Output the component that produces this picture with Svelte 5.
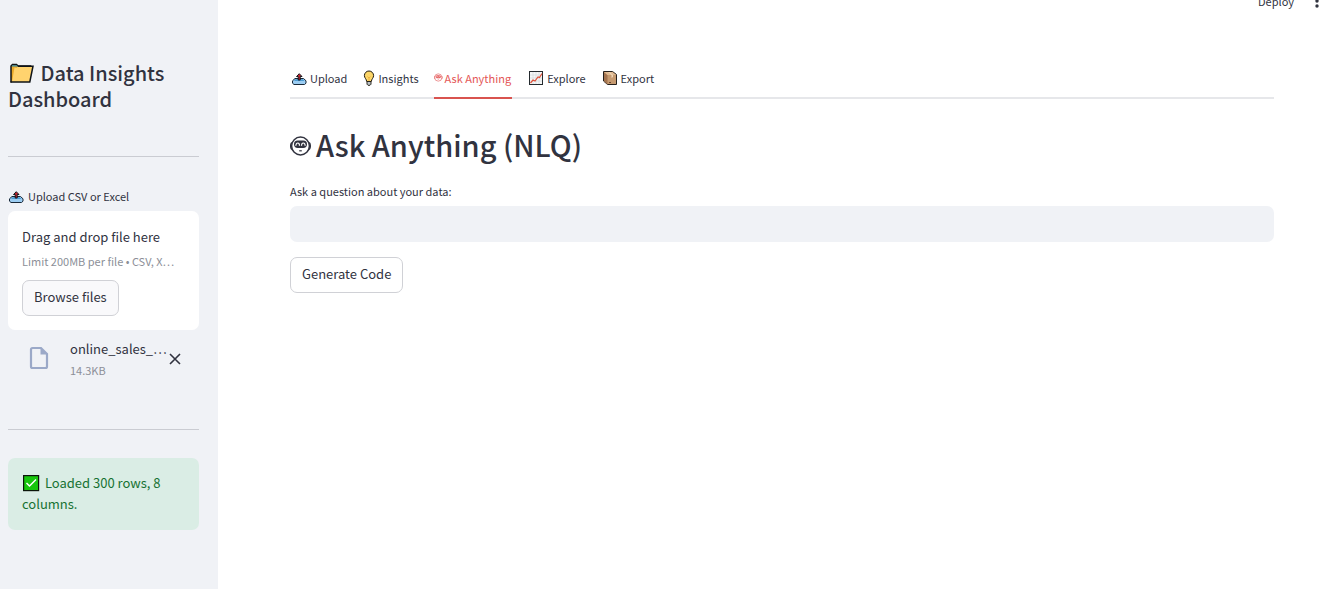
<script>
  const tabs = ['Upload', 'Insights', 'Ask Anything', 'Explore', 'Export'];
  let active = $state('Ask Anything');
  let question = $state('');
</script>

{#snippet tray()}
  <svg class="emoji" viewBox="0 0 16 16" aria-hidden="true">
    <path d="M4 8.500 1.500 10.800v2.400L3 14.500h10.500l1.500-1.300v-2.400L12.500 8.500z" fill="#9ccdf2" stroke="#182838" />
    <path d="M4.500 9.200h7.500l1.500 1.800h-10.500z" fill="#4b9bd3" />
    <path d="M8.250 3.700 5.500 6.500h1.700v3.500h2v-3.500h1.800z" fill="#c8202e" stroke="#15181c" />
  </svg>
{/snippet}

{#snippet bot()}
  <svg class="bot" viewBox="0 0 22 22" fill="none" stroke="currentColor" aria-hidden="true">
    <circle cx="10.500" cy="11" r="8.900" stroke-width="1.500" />
    <path d="M1.800 7.500Q.7 9 .7 11T1.800 14.500M19.200 7.500q1.100 1.500 1.100 3.500t-1.100 3.500" stroke-width="1.500" />
    <rect x="4" y="5.500" width="13" height="7.500" rx="3.700" fill="currentColor" stroke="none" />
    <path d="M5.800 10.800q.3-2.800 2-2.800t1.700 2.800M11.500 10.800q.1-2.800 1.800-2.800t1.900 2.800" stroke="#fff" stroke-width="1.200" />
    <path d="M9.200 15.800h2.600" stroke-width="1.200" />
  </svg>
{/snippet}

{#snippet tabIcon(name)}
  {#if name === 'Upload'}
    {@render tray()}
  {:else if name === 'Insights'}
    <svg class="bulb" viewBox="0 0 12 16" aria-hidden="true">
      <path d="M6 1a4.600 4.600 0 0 0-4.600 4.600C1.400 8 3.500 9 3.700 11.500h4.600C8.500 9 10.600 8 10.600 5.600A4.600 4.600 0 0 0 6 1z" fill="#fcd669" stroke="#1f1a10" />
      <path d="M4 11.500h4v2.700L7 15.300H5l-1-1.100z" fill="#b9c2c8" stroke="#1f1a10" stroke-width=".9" />
      <path d="M4.500 6.500 6 8l1.500-1.500M6 8v3" fill="none" stroke="#e49a27" stroke-width=".6" />
    </svg>
  {:else if name === 'Ask Anything'}
    {@render bot()}
  {:else if name === 'Explore'}
    <svg class="emoji" viewBox="0 0 16 16" aria-hidden="true">
      <rect x="1.500" y="1.500" width="13" height="13" fill="#f6f7f7" stroke="#242a2e" />
      <path d="M2 5h12M2 8h12M2 11h12M5 2v12M8 2v12M11 2v12" stroke="#d0d6da" stroke-width=".6" />
      <path d="m2.500 13 2.500-3 2 1 3-4 1.500.5 2.500-4" fill="none" stroke="#df5038" stroke-width="1.200" />
    </svg>
  {:else}
    <svg class="emoji" viewBox="0 0 16 16" aria-hidden="true">
      <path d="M1.500 1.500h9l4 3v10h-9l-4-3.500z" fill="#c69a70" stroke="#25201c" />
      <path d="m2 2 3.500 3v9.500L2 11z" fill="#a3734e" />
      <path d="M2 2h8.500L14 5H5.500z" fill="#dfb990" />
      <path d="m6 2 3.500 3v3l1.500-1V5L7.500 2z" fill="#efd5b5" />
      <path d="M7 12.500h2" stroke="#6d4a31" />
    </svg>
  {/if}
{/snippet}

<div class="app">
  <aside>
    <h2>
      <svg class="folder" viewBox="0 0 27 22" aria-hidden="true">
        <path d="M3 19.500V3l1.500-1.500h4L10 3h12.500v3" fill="#e9a928" stroke="#101417" stroke-width="1.500" />
        <path d="M4 2.300h5l.7 1.200H4z" fill="#2d87aa" />
        <path d="M6.500 4.500 4 19h17.500l3-15.500H10L8.500 5z" fill="#ffd36e" />
        <path d="M10 3.200h15L21.800 19H2.500" fill="none" stroke="#101417" stroke-width="1.500" />
      </svg>
      Data Insights Dashboard
    </h2>
    <hr />
    <section class="uploader">
      <label class="field-label" for="file-browse">{@render tray()} Upload CSV or Excel</label>
      <div class="dropzone">
        <div class="drop-title">Drag and drop file here</div>
        <div class="hint">Limit 200MB per file • CSV, X…</div>
        <button id="file-browse" class="button browse" type="button">Browse files</button>
      </div>
      <div class="file">
        <svg class="document" viewBox="0 0 20 24" aria-hidden="true">
          <path d="M3.500 2H12l6 6v12.500q0 1.500-1.500 1.500h-13Q2 22 2 20.500v-17Q2 2 3.500 2z" fill="none" stroke="#9ba9c8" stroke-width="2.200" />
          <path d="M11.500 2v6.500H18z" fill="#9ba9c8" />
        </svg>
        <div class="file-info">
          <div class="file-name">online_sales_…</div>
          <div class="hint">14.3KB</div>
        </div>
        <button class="remove" type="button" aria-label="Remove file">
          <svg viewBox="0 0 12 12" aria-hidden="true"><path d="m1 1 10 10M11 1 1 11" stroke="currentColor" stroke-width="1.600" /></svg>
        </button>
      </div>
    </section>
    <hr />
    <div class="alert" role="status">
      <svg class="check" viewBox="0 0 18 18" aria-hidden="true">
        <rect x="1.600" y="1.600" width="15" height="15" fill="#16c60c" stroke="#0b160a" stroke-width="1.200" />
        <path d="m4.500 9 3 3 6.500-6.500" fill="none" stroke="#fff" stroke-width="1.500" />
      </svg>
      Loaded 300 rows, 8 columns.
    </div>
  </aside>

  <main>
    <header>
      <button class="deploy" type="button">Deploy</button>
      <button class="menu" type="button" aria-label="Main menu">
        <svg viewBox="0 0 4 16" aria-hidden="true"><circle cx="2" cy="3" r="1.700" /><circle cx="2" cy="8" r="1.700" /><circle cx="2" cy="13" r="1.700" /></svg>
      </button>
    </header>
    <div class="tabs" role="tablist">
      {#each tabs as tab}
        <button role="tab" type="button" aria-selected={active === tab} class:active={active === tab} onclick={() => (active = tab)}>
          {@render tabIcon(tab)}<span>{tab}</span>
        </button>
      {/each}
    </div>
    <h1>{@render bot()}<span>Ask Anything (NLQ)</span></h1>
    <label class="field-label" for="question">Ask a question about your data:</label>
    <input id="question" type="text" bind:value={question} />
    <button class="button" type="button">Generate Code</button>
  </main>
</div>

<style>
  :global(body) {
    margin: 0;
    background: #fff;
  }
  .app {
    display: flex;
    min-height: 100vh;
    color: #31333f;
    font: 13px/20px "Noto Sans CJK KR", "Open Sans", sans-serif;
  }
  * {
    box-sizing: border-box;
  }
  button, input {
    font: inherit;
    color: inherit;
  }
  button {
    padding: 0;
    border: 0;
    background: none;
    cursor: pointer;
  }
  svg {
    flex: none;
  }
  aside {
    flex: 0 0 218px;
    min-width: 0;
    padding: 60px 19px 56px 8px;
    background: #f0f2f6;
  }
  h1, h2 {
    margin: 0;
    font-weight: 500;
  }
  h2 {
    font-size: 20px;
    line-height: 26px;
  }
  .folder {
    width: 27px;
    height: 22px;
    margin-right: 1px;
    vertical-align: -4px;
  }
  hr {
    margin: 44px 0 28px;
    border: 0;
    border-top: 1px solid #caccd2;
  }
  .field-label {
    display: flex;
    align-items: center;
    gap: 4px;
    font-size: 11px;
  }
  .uploader .field-label {
    margin: 29px 0 5px;
  }
  .emoji {
    width: 16px;
    height: 16px;
  }
  .dropzone {
    padding: 16px 14px 14px;
    border-radius: 7px;
    background: #fff;
  }
  .hint {
    overflow: hidden;
    color: #8c8f98;
    font-size: 11px;
    text-overflow: ellipsis;
    white-space: nowrap;
  }
  .dropzone .hint {
    margin: 4px 0 9px;
  }
  .button {
    height: 36px;
    padding: 0 11px 2px;
    border: 1px solid #d0d1d6;
    border-radius: 7px;
    background: #fff;
  }
  .browse {
    background: #f9f9fb;
  }
  .file {
    display: flex;
    align-items: center;
    padding: 9px 18px 5px 21px;
  }
  .document {
    width: 20px;
    height: 24px;
    margin: 0 21px 3px 0;
  }
  .file-info {
    flex: 1;
    min-width: 0;
  }
  .file-name {
    margin-bottom: 1px;
    white-space: nowrap;
  }
  .remove {
    display: flex;
    width: 12px;
    margin: 0 0 2px 2px;
  }
  .remove svg {
    width: 12px;
    height: 12px;
  }
  .alert {
    padding: 14px 14px 16px;
    border-radius: 7px;
    background: #daede5;
    color: #177233;
    line-height: 21px;
  }
  .check {
    width: 18px;
    height: 18px;
    margin-right: 2px;
    vertical-align: -4px;
  }
  main {
    position: relative;
    flex: 1;
    min-width: 0;
    padding: 60px 64px 0 72px;
  }
  header {
    position: absolute;
    top: -9px;
    right: 19px;
    display: flex;
    align-items: center;
    gap: 21px;
    height: 20px;
    font-size: 11px;
  }
  .menu svg {
    display: block;
    width: 4px;
    height: 16px;
    fill: currentColor;
  }
  .tabs {
    display: flex;
    gap: 15px;
    border-bottom: 2px solid #e6e7ea;
  }
  .tabs button {
    display: flex;
    align-items: center;
    gap: 3px;
    height: 39px;
    margin-bottom: -2px;
    padding-bottom: 2px;
    border-bottom: 2px solid transparent;
    font-size: 11px;
  }
  .tabs .emoji, .tabs .bulb {
    margin: 1px 0 0 1px;
  }
  .tabs .active {
    gap: 2px;
    padding-right: 1px;
    border-color: #d9534f;
    color: #e45656;
  }
  .bulb {
    width: 12px;
    height: 16px;
  }
  .tabs .bot {
    width: 9px;
    height: 9px;
  }
  h1 {
    display: flex;
    align-items: center;
    gap: 4px;
    margin: 26px 0 18px;
    font-size: 29px;
    line-height: 38px;
  }
  h1 .bot {
    width: 22px;
    height: 22px;
    margin-top: 4px;
  }
  input {
    display: block;
    width: 100%;
    height: 36px;
    margin: 5px 0 15px;
    padding: 0 11px;
    border: 0;
    border-radius: 7px;
    background: #f0f2f6;
  }
</style>
